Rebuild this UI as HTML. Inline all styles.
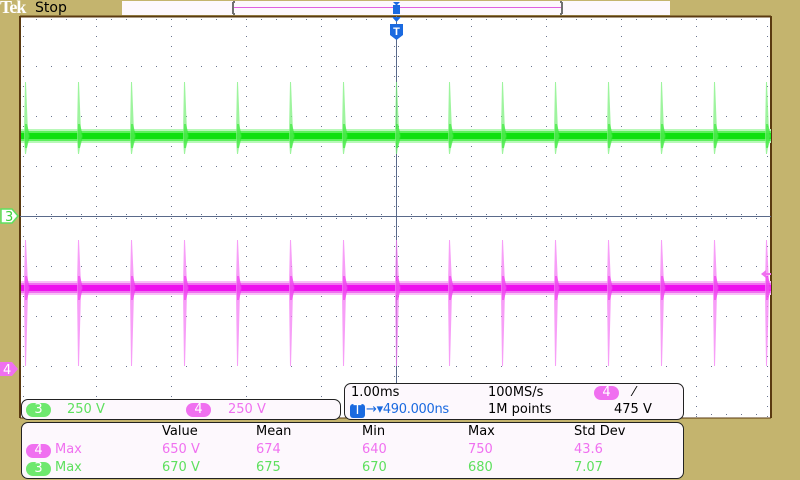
<!DOCTYPE html>
<html><head><meta charset="utf-8"><style>
body{margin:0;width:800px;height:480px;overflow:hidden;background:#c4b46e;font-family:"DejaVu Sans","Liberation Sans",sans-serif;}
svg{position:absolute;left:0;top:0}
.t{position:absolute;font-size:13px;white-space:nowrap;line-height:16px}
.box{position:absolute;background:#fdf8fd;border:1px solid #222;border-radius:7px;box-sizing:border-box}
.badge{position:absolute;border-radius:8px;color:#fff;font-size:13px;text-align:center;line-height:14px;height:14px;width:24px}
</style></head><body>
<svg width="800" height="480">
<defs>
<g id="gs"><path d="M-1,-4 L0,-54 L1,-54 L3,-4 L4,0 L3,4 L1,18 L0,18 L-1,4 Z" fill="#7ef07e" opacity=".75"/><path d="M0,-12 L2,-12 L5,0 L2,12 L0,12 Z" fill="#30e830" opacity=".6"/></g>
<g id="ms"><path d="M-1,-4 L0,-48 L1,-48 L3,-4 L4,0 L3,4 L1,78 L0,78 L-1,4 Z" fill="#f47ef4" opacity=".75"/><path d="M0,-12 L2,-12 L5,0 L2,12 L0,12 Z" fill="#ee30ee" opacity=".6"/></g>
</defs>
<rect x="20" y="16" width="751" height="402" fill="#ffffff"/>
<line x1="20" y1="16" x2="20" y2="418" stroke="#5a3a10" stroke-width="2"/>
<line x1="771" y1="16" x2="771" y2="418" stroke="#5a3a10" stroke-width="2"/>
<line x1="20" y1="16.5" x2="771" y2="16.5" stroke="#5a3a10" stroke-width="2"/>
<line x1="20" y1="418" x2="771" y2="418" stroke="#5a3a10" stroke-width="1"/>
<g stroke="#6a7590" stroke-width="1" stroke-dasharray="1 14">
<line x1="36" y1="66.5" x2="771" y2="66.5"/><line x1="36" y1="116.5" x2="771" y2="116.5"/><line x1="36" y1="166.5" x2="771" y2="166.5"/>
<line x1="36" y1="266.5" x2="771" y2="266.5"/><line x1="36" y1="316.5" x2="771" y2="316.5"/><line x1="36" y1="366.5" x2="771" y2="366.5"/>
</g>
<g stroke="#6a7590" stroke-width="1" stroke-dasharray="1 9">
<line x1="96.5" y1="26" x2="96.5" y2="418"/><line x1="171.5" y1="26" x2="171.5" y2="418"/><line x1="246.5" y1="26" x2="246.5" y2="418"/><line x1="321.5" y1="26" x2="321.5" y2="418"/>
<line x1="471.5" y1="26" x2="471.5" y2="418"/><line x1="546.5" y1="26" x2="546.5" y2="418"/><line x1="621.5" y1="26" x2="621.5" y2="418"/><line x1="696.5" y1="26" x2="696.5" y2="418"/>
</g>
<g stroke="#6a7590" stroke-dasharray="1 9"><line x1="23.5" y1="26" x2="23.5" y2="418"/><line x1="767.5" y1="26" x2="767.5" y2="418"/></g>
<g stroke="#6a7590" stroke-dasharray="1 14"><line x1="36" y1="19.5" x2="771" y2="19.5"/><line x1="36" y1="414.5" x2="771" y2="414.5"/></g>
<line x1="20" y1="216.5" x2="771" y2="216.5" stroke="#5a6a8a"/>
<line x1="396.5" y1="16" x2="396.5" y2="418" stroke="#5a6a8a"/>
<g stroke="#5a6a8a" stroke-dasharray="1 14"><line x1="36" y1="214.5" x2="771" y2="214.5"/><line x1="36" y1="218.5" x2="771" y2="218.5"/></g>
<g stroke="#5a6a8a" stroke-dasharray="1 9"><line x1="394.5" y1="26" x2="394.5" y2="418"/><line x1="398.5" y1="26" x2="398.5" y2="418"/></g>
<rect x="21" y="129" width="750" height="14" fill="#b8f8b8"/>
<rect x="21" y="131" width="750" height="10" fill="#5ef05e"/>
<rect x="21" y="133" width="750" height="6" fill="#10e010"/>
<g><use href="#gs" x="25" y="136"/><use href="#gs" x="78" y="136"/><use href="#gs" x="131" y="136"/><use href="#gs" x="184" y="136"/><use href="#gs" x="237" y="136"/><use href="#gs" x="290" y="136"/><use href="#gs" x="343" y="136"/><use href="#gs" x="396" y="136"/><use href="#gs" x="449" y="136"/><use href="#gs" x="502" y="136"/><use href="#gs" x="555" y="136"/><use href="#gs" x="608" y="136"/><use href="#gs" x="661" y="136"/><use href="#gs" x="714" y="136"/><use href="#gs" x="766" y="136"/></g>
<rect x="21" y="281" width="750" height="14" fill="#f8c0f8"/>
<rect x="21" y="283" width="750" height="10" fill="#f070f0"/>
<rect x="21" y="285" width="750" height="6" fill="#ee10ee"/>
<g><use href="#ms" x="25" y="288"/><use href="#ms" x="78" y="288"/><use href="#ms" x="131" y="288"/><use href="#ms" x="184" y="288"/><use href="#ms" x="237" y="288"/><use href="#ms" x="290" y="288"/><use href="#ms" x="343" y="288"/><use href="#ms" x="396" y="288"/><use href="#ms" x="449" y="288"/><use href="#ms" x="502" y="288"/><use href="#ms" x="555" y="288"/><use href="#ms" x="608" y="288"/><use href="#ms" x="661" y="288"/><use href="#ms" x="714" y="288"/><use href="#ms" x="766" y="288"/></g>
<path d="M761,274 L766,270 L766,273 L771,273 L771,275 L766,275 L766,278 Z" fill="#f070f0"/>
<rect x="122" y="1" width="548" height="14" fill="#fdf8fd"/>
<line x1="232" y1="7.5" x2="563" y2="7.5" stroke="#e060e0"/>
<path d="M233,2 L233,14 M233,2 L235,2 M233,14 L235,14 M562,2 L562,14 M562,2 L560,2 M562,14 L560,14" stroke="#707070" stroke-width="2" fill="none"/>
<path d="M393,2 L400,2 L397,5 L400,5 L400,14 L393,14 L393,5 L396,5 Z" fill="#1a6ae0"/>
<path d="M392,17 L401,17 L396.5,22 Z" fill="#1a6ae0"/>
<path d="M390,24 L403,24 L403,35 L396.5,40 L390,35 Z" fill="#1a6ae0"/>
<text x="396.5" y="35" fill="#fff" font-size="11" font-weight="bold" text-anchor="middle" font-family="Liberation Sans">T</text>
<path d="M1,209 L12,209 L18,216 L12,223 L1,223 Z" fill="#fff" stroke="#5ee05e" stroke-width="1.5"/>
<text x="5" y="221" fill="#3cd03c" font-size="13" font-family="DejaVu Sans">3</text>
<path d="M0,362 L12,362 L18,369 L12,376 L0,376 Z" fill="#f070f0"/>
<text x="3" y="374" fill="#fff" font-size="13" font-family="DejaVu Sans">4</text>
</svg>
<div class="t" style="left:0px;top:-1px;font-family:'Liberation Serif',serif;font-weight:bold;color:#fff;font-size:18px;letter-spacing:-1px">Tek</div>
<div class="t" style="left:35px;top:0;color:#000;font-size:14px">Stop</div>

<div class="box" style="left:21px;top:399px;width:320px;height:21px"></div>
<div class="badge" style="left:26px;top:403px;background:#6ee86e;width:25px">3</div>
<div class="t" style="left:67px;top:402px;color:#5ee05e">250 V</div>
<div class="badge" style="left:186px;top:403px;background:#f070f0;width:25px">4</div>
<div class="t" style="left:228px;top:402px;color:#f070f0">250 V</div>

<div class="box" style="left:344px;top:383px;width:340px;height:37px"></div>
<div class="t" style="left:351px;top:385px;color:#000">1.00ms</div>
<div class="badge" style="left:350px;top:404px;background:#1a6ae0;width:15px;border-radius:3px">T</div>
<div class="t" style="left:366px;top:402px;color:#1a6ae0;letter-spacing:-0.3px">→▾490.000ns</div>
<div class="t" style="left:488px;top:385px;color:#000">100MS/s</div>
<div class="t" style="left:488px;top:402px;color:#000">1M points</div>
<div class="badge" style="left:594px;top:386px;background:#f070f0;width:25px">4</div>
<div class="t" style="left:633px;top:385px;color:#000">⁄</div>
<div class="t" style="left:614px;top:402px;color:#000">475 V</div>

<div class="box" style="left:21px;top:422px;width:663px;height:57px"></div>
<div class="t" style="left:162px;top:424px;color:#000">Value</div>
<div class="t" style="left:256px;top:424px;color:#000">Mean</div>
<div class="t" style="left:362px;top:424px;color:#000">Min</div>
<div class="t" style="left:468px;top:424px;color:#000">Max</div>
<div class="t" style="left:574px;top:424px;color:#000">Std Dev</div>
<div class="badge" style="left:26px;top:444px;background:#f070f0;width:25px">4</div>
<div class="t" style="left:55px;top:442px;color:#f070f0">Max</div>
<div class="t" style="left:162px;top:442px;color:#f070f0">650 V</div>
<div class="t" style="left:256px;top:442px;color:#f070f0">674</div>
<div class="t" style="left:362px;top:442px;color:#f070f0">640</div>
<div class="t" style="left:468px;top:442px;color:#f070f0">750</div>
<div class="t" style="left:574px;top:442px;color:#f070f0">43.6</div>
<div class="badge" style="left:26px;top:462px;background:#6ee86e;width:25px">3</div>
<div class="t" style="left:55px;top:460px;color:#5ee05e">Max</div>
<div class="t" style="left:162px;top:460px;color:#5ee05e">670 V</div>
<div class="t" style="left:256px;top:460px;color:#5ee05e">675</div>
<div class="t" style="left:362px;top:460px;color:#5ee05e">670</div>
<div class="t" style="left:468px;top:460px;color:#5ee05e">680</div>
<div class="t" style="left:574px;top:460px;color:#5ee05e">7.07</div>
</body></html>
